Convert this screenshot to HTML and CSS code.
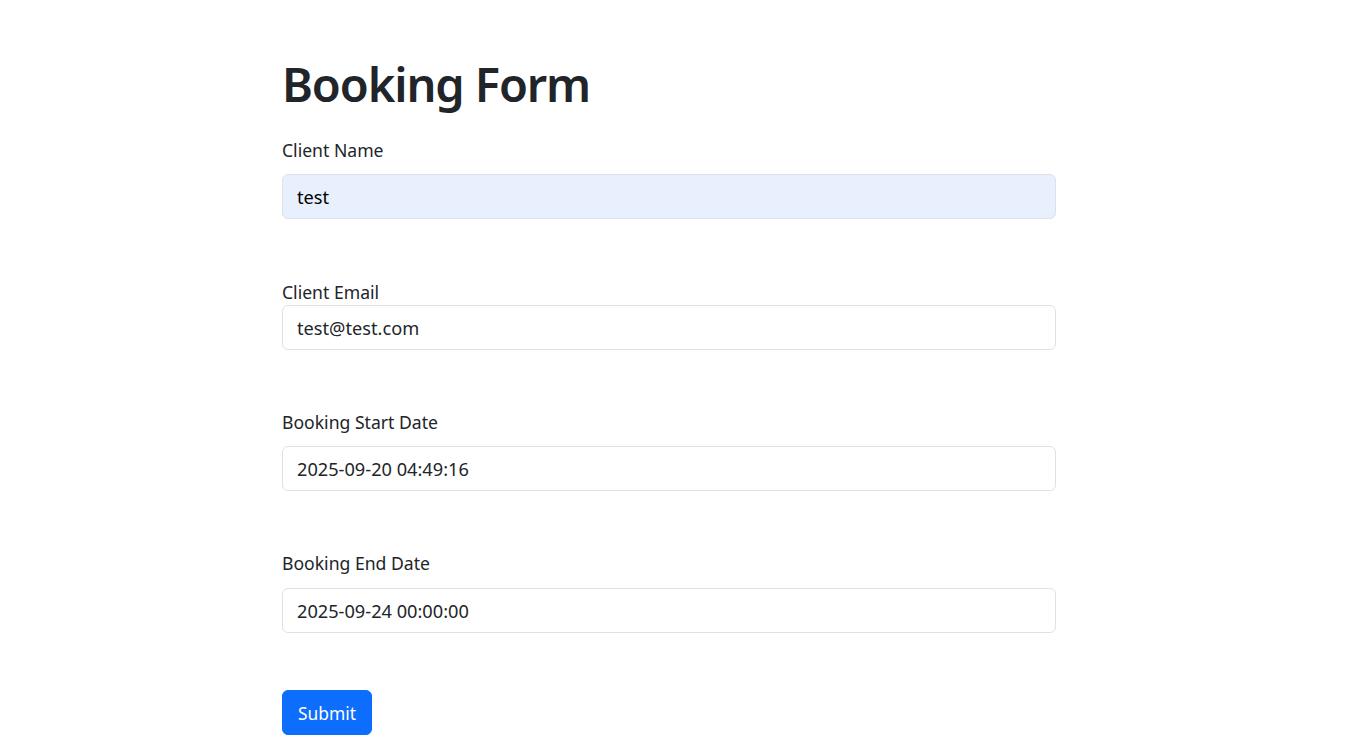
FILE: index.html
```html
<!DOCTYPE html>
<html lang="en">
<head>
<meta charset="utf-8">
<title>Booking Form</title>
<link rel="stylesheet" href="styles.css">
</head>
<body>
<main class="page">
  <h1 class="title">Booking Form</h1>
  <form class="form">
    <div class="group group-first">
      <label class="label">Client Name</label>
      <input class="control autofill" type="text" value="test">
    </div>
    <div class="group">
      <label class="label label-tight">Client Email</label>
      <input class="control" type="text" value="test@test.com">
    </div>
    <div class="group">
      <label class="label">Booking Start Date</label>
      <input class="control" type="text" value="2025-09-20 04:49:16">
    </div>
    <div class="group">
      <label class="label label-loose">Booking End Date</label>
      <input class="control" type="text" value="2025-09-24 00:00:00">
    </div>
    <div class="actions">
      <button class="btn" type="button">Submit</button>
    </div>
  </form>
</main>
</body>
</html>
```
FILE: styles.css
```css
* { box-sizing: border-box; }
html, body { margin: 0; padding: 0; background: #fff; }
body {
  font-family: "Noto Sans", "Open Sans", sans-serif;
  color: #212529;
  font-size: 16px;
  line-height: 1.5;
}
.page {
  width: 774px;
  margin-left: 282px;
  padding-top: 56px;
}
.title {
  margin: 0 0 26px;
  font-size: 47px;
  font-weight: 600;
  line-height: 1.2;
  letter-spacing: -1.1px;
}
.form {
  display: flex;
  flex-direction: column;
  gap: 60px;
}
.group {
  display: flex;
  flex-direction: column;
}
.group-first { margin-bottom: 1px; }
.label {
  display: block;
  margin-bottom: 12px;
  font-size: 17.6px;
  line-height: 24px;
}
.label-tight { margin-bottom: 1px; }
.label-loose { margin-bottom: 13px; }
.control {
  display: block;
  width: 100%;
  height: 45px;
  padding: 0 14px;
  font-family: inherit;
  font-size: 18.2px;
  color: #212529;
  background: #fff;
  border: 1px solid #dee2e6;
  border-radius: 6px;
  outline: none;
}
.control.autofill { background: #e8f0fe; color: #000; }
.actions { margin-top: -3px; }
.btn {
  height: 45px;
  padding: 0 15px;
  font-family: inherit;
  font-size: 17.4px;
  color: #fff;
  background: #0d6efd;
  border: 1px solid #0d6efd;
  border-radius: 6px;
  cursor: pointer;
}
```
